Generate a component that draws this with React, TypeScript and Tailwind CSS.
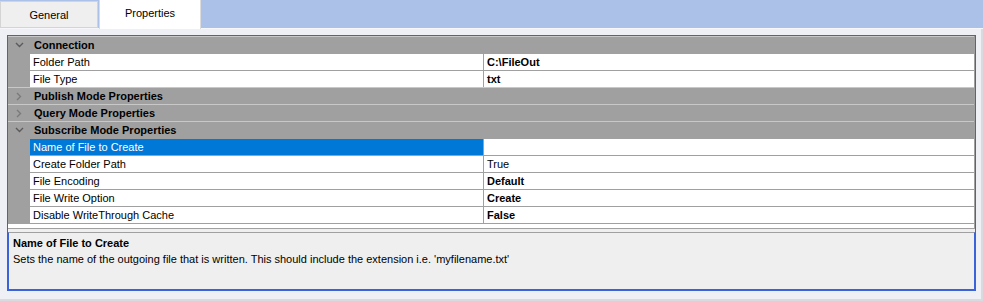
const font = { fontFamily: '"Liberation Sans", Arial, sans-serif' };

type Row =
  | { kind: "group"; label: string; open: boolean }
  | { kind: "prop"; name: string; value: string; bold?: boolean; selected?: boolean };

const rows: Row[] = [
  { kind: "group", label: "Connection", open: true },
  { kind: "prop", name: "Folder Path", value: "C:\\FileOut", bold: true },
  { kind: "prop", name: "File Type", value: "txt", bold: true },
  { kind: "group", label: "Publish Mode Properties", open: false },
  { kind: "group", label: "Query Mode Properties", open: false },
  { kind: "group", label: "Subscribe Mode Properties", open: true },
  { kind: "prop", name: "Name of File to Create", value: "", selected: true },
  { kind: "prop", name: "Create Folder Path", value: "True" },
  { kind: "prop", name: "File Encoding", value: "Default", bold: true },
  { kind: "prop", name: "File Write Option", value: "Create", bold: true },
  { kind: "prop", name: "Disable WriteThrough Cache", value: "False", bold: true },
];

function Chevron({ open }: { open: boolean }) {
  return open ? (
    <svg width="9" height="6" viewBox="0 0 9 6" className="block">
      <path d="M1 1 L4.5 4.5 L8 1" fill="none" stroke="#5b5b5b" strokeWidth="1.4" />
    </svg>
  ) : (
    <svg width="6" height="9" viewBox="0 0 6 9" className="block">
      <path d="M1 1 L4.5 4.5 L1 8" fill="none" stroke="#7a7a7a" strokeWidth="1.4" />
    </svg>
  );
}

function GridRow({ row }: { row: Row }) {
  if (row.kind === "group") {
    return (
      <div className="flex h-[17px] border-t border-[#c8c8c8] bg-[#a0a0a0]">
        <div className="flex w-[22px] shrink-0 items-center justify-center">
          <Chevron open={row.open} />
        </div>
        <div className="flex items-center pl-[4px] text-[11px] font-bold leading-none text-black">
          {row.label}
        </div>
      </div>
    );
  }
  return (
    <div className="flex h-[17px] border-t border-[#a0a0a0] bg-[#a0a0a0]">
      <div className="w-[22px] shrink-0" />
      <div
        className={
          row.selected
            ? "flex w-[453px] shrink-0 items-center bg-[#0078d7] pl-[3px] text-[11px] leading-none text-white"
            : "flex w-[453px] shrink-0 items-center bg-white pl-[3px] text-[11px] leading-none text-black"
        }
      >
        {row.name}
      </div>
      <div
        className={
          row.bold
            ? "ml-px flex flex-1 items-center bg-white pl-[3px] text-[11px] font-bold leading-none text-black"
            : "ml-px flex flex-1 items-center bg-white pl-[3px] text-[11px] leading-none text-black"
        }
      >
        {row.value}
      </div>
    </div>
  );
}

export default function App() {
  return (
    <div className="h-[301px] w-[983px] overflow-hidden bg-[#eef0f5]" style={font}>
      {/* tab strip */}
      <div className="flex h-[29px] items-start border-b border-[#f7f7fb] bg-[#abc1e8]">
        <div className="mt-px flex h-[27px] w-[98px] items-center justify-center border border-[#d4d4d4] bg-[#efefef] pt-px text-[11px] text-black">
          General
        </div>
        <div className="ml-px flex h-[29px] w-[102px] items-center justify-center border-x border-[#dcdcdc] bg-white pb-[2px] text-[11px] text-black">
          Properties
        </div>
      </div>

      <div className="h-[272px] border-b-2 border-r-2 border-[#d9dae0] pt-[6px]">
        <div className="ml-[7px] w-[969px] border border-[#3b63d9]">
          {/* property grid */}
          <div className="border-b border-r border-[#a0a0a0] bg-white">
            <div className="border-b border-[#a0a0a0]">
              {rows.map((r, i) => (
                <GridRow key={i} row={r} />
              ))}
            </div>
            <div className="h-[4px]" />
          </div>
          <div className="h-[3px] bg-[#efefef]" />
          {/* description */}
          <div className="h-[58px] border-x border-b border-t border-x-[#3b63d9] border-b-[#3b63d9] border-t-[#a0a0a0] bg-[#efefef] pl-[4px] pt-[3px]">
            <div className="text-[11px] font-bold leading-[15px] text-black">Name of File to Create</div>
            <div className="text-[11px] leading-[17px] text-black">
              Sets the name of the outgoing file that is written. This should include the extension i.e. 'myfilename.txt'
            </div>
          </div>
        </div>
      </div>
    </div>
  );
}
